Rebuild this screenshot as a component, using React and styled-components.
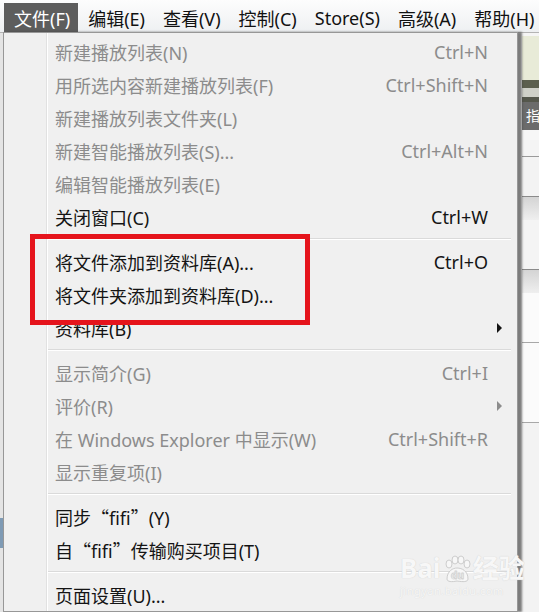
import React from 'react';
import styled, { createGlobalStyle } from 'styled-components';

const Global = createGlobalStyle`
  html, body { margin: 0; padding: 0; overflow: hidden; background: #f2f2f2; }
  body { width: 539px; height: 612px; font-family: "Noto Sans", "Noto Sans CJK SC", sans-serif; }
`;

const Window = styled.div`
  position: relative;
  width: 539px;
  height: 612px;
  overflow: hidden;
  display: flex;
  flex-direction: column;
  background: #f2f2f2;
`;

const MenuBar = styled.div`
  height: 33px;
  flex-shrink: 0;
  box-sizing: border-box;
  display: flex;
  align-items: flex-end;
  padding-left: 4px;
  background: linear-gradient(#fdfdfd, #eef0f2);
  border-bottom: 1px solid #b4b4b4;
  overflow: hidden;
`;

const BarItem = styled.div`
  height: 29px;
  flex-shrink: 0;
  white-space: nowrap;
  padding: 0 ${p => (p.$pr ?? 8)}px 0 10px;
  display: flex;
  align-items: center;
  font-size: 18px;
  color: ${p => (p.$active ? '#ffffff' : '#111111')};
  background: ${p => (p.$active ? '#5d5d5d' : 'transparent')};
`;

const Body = styled.div`
  flex: 1;
  display: flex;
`;

const LeftEdge = styled.div`
  width: 3px;
  display: flex;
  flex-direction: column;
  background: #d9d9d9;
  border-right: 1px solid #a8a8a8;
`;

const EdgeBlock = styled.div`
  height: ${p => p.$h}px;
  background: ${p => p.$bg};
`;

const Main = styled.div`
  flex: 1;
`;

const RightCol = styled.div`
  width: 17px;
  display: flex;
  flex-direction: column;
  background: #f3f3f3;
`;

const Strip = styled.div`
  height: ${p => p.$h}px;
  flex-shrink: 0;
  background: ${p => p.$bg};
  border-bottom: ${p => (p.$line ? `1px solid ${p.$line}` : 'none')};
  color: #fff;
  font-size: 14px;
  line-height: ${p => p.$h}px;
  overflow: hidden;
  padding-left: 4px;
  box-sizing: border-box;
`;

const Dropdown = styled.div`
  position: absolute;
  left: 3px;
  top: 32px;
  width: 515px;
  box-sizing: border-box;
  border: 1px solid #979797;
  padding-top: 2px;
  background: linear-gradient(to right, #f0f0f0 42px, #e1e1e1 42px, #e1e1e1 43px, #ffffff 43px, #ffffff 44px, #f0f0f0 44px);
  box-shadow: 4px 0 2px rgba(60, 60, 60, 0.65);
`;

const Row = styled.div`
  height: 33px;
  display: grid;
  grid-template-columns: 1fr auto 29px;
  align-items: center;
  padding-left: 51px;
  font-size: 18px;
  color: ${p => (p.$disabled ? '#8c8c8c' : '#141414')};
  white-space: nowrap;
`;

const Label = styled.span``;

const Shortcut = styled.span`
  text-align: right;
`;

const Quote = styled.span`
  font-family: "Noto Sans CJK SC", sans-serif;
`;

const ArrowCell = styled.span`
  display: flex;
  align-items: center;
  padding-left: 9px;
`;

const Arrow = styled.span`
  width: 0;
  height: 0;
  border-top: 5px solid transparent;
  border-bottom: 5px solid transparent;
  border-left: 5px solid ${p => (p.$disabled ? '#8c8c8c' : '#141414')};
`;

const Separator = styled.div`
  height: 12px;
  margin: 0 6px 0 44px;
  display: flex;
  flex-direction: column;
  justify-content: center;
  &::before {
    content: '';
    display: block;
    border-top: 1px solid #dadada;
    border-bottom: 1px solid #ffffff;
  }
`;

const Highlight = styled.div`
  position: absolute;
  left: 30px;
  top: 234px;
  width: 280px;
  height: 91px;
  box-sizing: border-box;
  border: 5px solid #e5141c;
  filter: blur(0.4px);
  pointer-events: none;
`;

const Watermark = styled.div`
  position: absolute;
  left: 400px;
  top: 553px;
  display: flex;
  flex-direction: column;
  align-items: flex-start;
  pointer-events: none;
`;

const WmTitle = styled.div`
  display: flex;
  align-items: flex-end;
  font-family: "Noto Sans", "Noto Sans CJK SC", sans-serif;
  font-size: 26px;
  font-weight: 700;
  line-height: 30px;
  color: #f7f7f7;
  text-shadow: 0 0 1px #c8c8c8;
`;

const WmSub = styled.div`
  font-family: "Noto Sans", sans-serif;
  font-size: 11px;
  color: #f7f7f7;
  text-shadow: 0 0 1px #cfcfcf;
  letter-spacing: 0.5px;
`;

const barItems = ['文件(F)', '编辑(E)', '查看(V)', '控制(C)', 'Store(S)', '高级(A)', '帮助(H)'];

function q(c) {
  return { quote: c };
}

const menu = [
  { t: '新建播放列表(N)', k: 'Ctrl+N', d: true },
  { t: '用所选内容新建播放列表(F)', k: 'Ctrl+Shift+N', d: true },
  { t: '新建播放列表文件夹(L)', d: true },
  { t: '新建智能播放列表(S)...', k: 'Ctrl+Alt+N', d: true },
  { t: '编辑智能播放列表(E)', d: true },
  { t: '关闭窗口(C)', k: 'Ctrl+W' },
  'sep',
  { t: '将文件添加到资料库(A)...', k: 'Ctrl+O' },
  { t: '将文件夹添加到资料库(D)...' },
  { t: '资料库(B)', sub: true },
  'sep',
  { t: '显示简介(G)', k: 'Ctrl+I', d: true },
  { t: '评价(R)', sub: true, d: true },
  { t: '在 Windows Explorer 中显示(W)', k: 'Ctrl+Shift+R', d: true },
  { t: '显示重复项(I)', d: true },
  'sep',
  { t: ['同步', q('“'), 'fifi', q('”'), '(Y)'] },
  { t: ['自', q('“'), 'fifi', q('”'), '传输购买项目(T)'] },
  'sep',
  { t: '页面设置(U)...' },
];

function renderLabel(t) {
  if (typeof t === 'string') return t;
  return t.map((part, i) =>
    typeof part === 'string' ? (
      <React.Fragment key={i}>{part}</React.Fragment>
    ) : (
      <Quote key={i}>{part.quote}</Quote>
    )
  );
}

function Paw() {
  return (
    <svg width="30" height="28" viewBox="0 0 30 28" style={{ margin: '0 1px' }}>
      <g fill="#f7f7f7" stroke="#cdcdcd" strokeWidth="1">
        <ellipse cx="7" cy="9" rx="3" ry="4" />
        <ellipse cx="13" cy="5" rx="3" ry="4" />
        <ellipse cx="19" cy="5" rx="3" ry="4" />
        <ellipse cx="25" cy="9" rx="3" ry="4" />
        <path d="M5 24 C5 16 11 13 15 13 C20 13 26 16 26 24 C26 27 21 27 15 26 C10 27 5 27 5 24 Z" />
      </g>
      <text x="15.5" y="24" textAnchor="middle" fontSize="10" fontWeight="700" fill="#f7f7f7" stroke="#cdcdcd" strokeWidth="0.4" fontFamily="Noto Sans, sans-serif">du</text>
    </svg>
  );
}

export default function App() {
  return (
    <>
      <Global />
      <Window>
        <MenuBar>
          {barItems.map((b, i) => (
            <BarItem key={b} $active={i === 0}>{b}</BarItem>
          ))}
        </MenuBar>
        <Body>
          <LeftEdge>
            <EdgeBlock $h={485} $bg="#e4e4e4" />
            <EdgeBlock $h={30} $bg="#7f9bb5" />
            <EdgeBlock $h={100} $bg="#e4e4e4" />
          </LeftEdge>
          <Main />
          <RightCol>
            <Strip $h={3} $bg="#f5f5f5" />
            <Strip $h={44} $bg="#e8ebd8" />
            <Strip $h={8} $bg="#5c5f4e" />
            <Strip $h={9} $bg="#cfd0c8" />
            <Strip $h={5} $bg="#55574c" />
            <Strip $h={28} $bg="#6b6b6b">指</Strip>
            <Strip $h={10} $bg="#f7f7f7" />
            <Strip $h={17} $bg="#f4f4f4" $line="#9a9a9a" />
            <Strip $h={40} $bg="#f3f3f3" $line="#8a8a8a" />
            <Strip $h={23} $bg="linear-gradient(#d4d4d4, #efefef)" />
            <Strip $h={50} $bg="#f4f4f4" $line="#8a8a8a" />
            <Strip $h={23} $bg="linear-gradient(#d4d4d4, #efefef)" />
            <Strip $h={50} $bg="#fbfbfb" $line="#a8a8a8" />
            <Strip $h={80} $bg="#fbfbfb" $line="#a8a8a8" />
            <Strip $h={200} $bg="#f3f3f3" />
          </RightCol>
        </Body>

        <Dropdown>
          {menu.map((m, i) =>
            m === 'sep' ? (
              <Separator key={i} />
            ) : (
              <Row key={i} $disabled={m.d}>
                <Label>{renderLabel(m.t)}</Label>
                <Shortcut>{m.k || ''}</Shortcut>
                <ArrowCell>{m.sub ? <Arrow $disabled={m.d} /> : null}</ArrowCell>
              </Row>
            )
          )}
        </Dropdown>

        <Highlight />

        <Watermark>
          <WmTitle>
            Bai<Paw />经验
          </WmTitle>
          <WmSub>jingyan.baidu.com</WmSub>
        </Watermark>
      </Window>
    </>
  );
}
